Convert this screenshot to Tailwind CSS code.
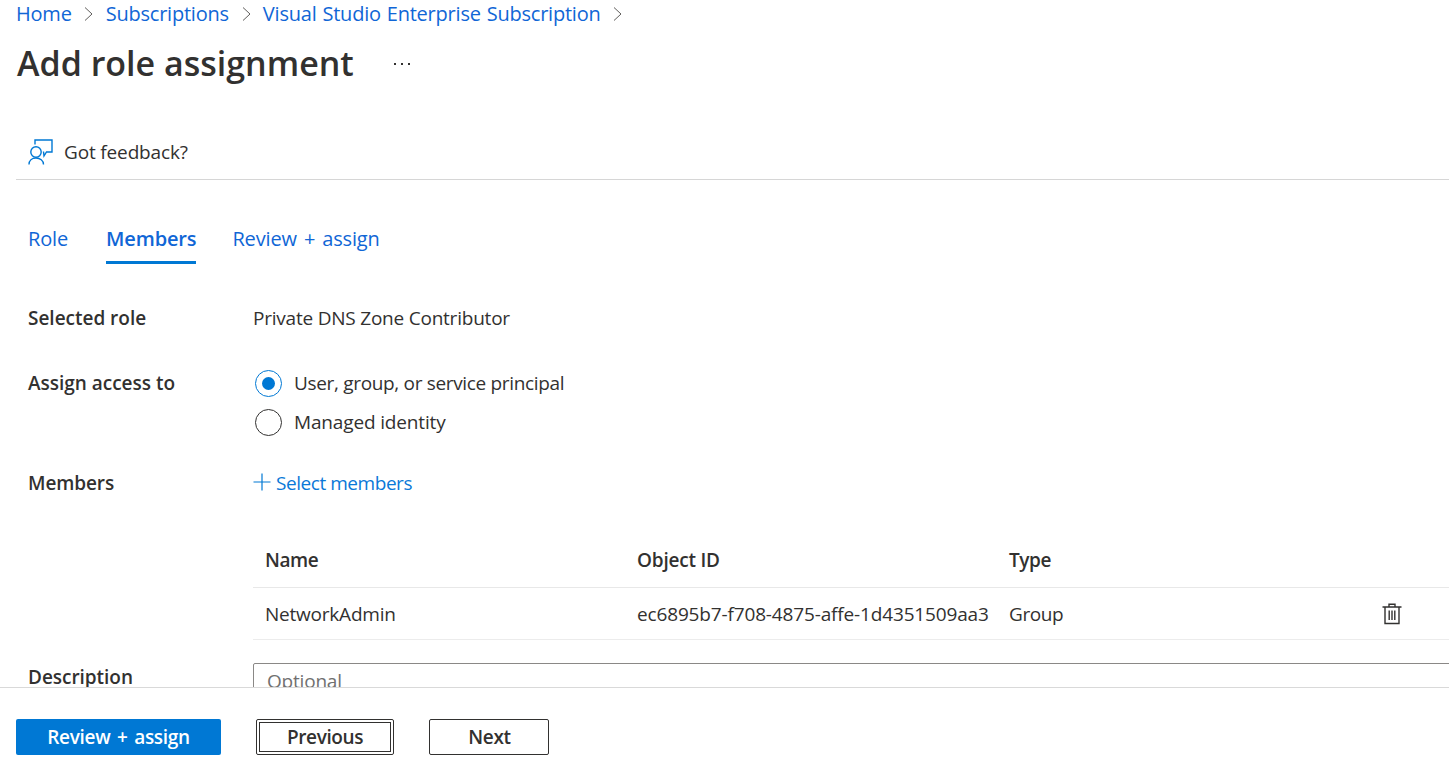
<!DOCTYPE html>
<html lang="en">
<head>
<meta charset="utf-8">
<script src="https://cdn.jsdelivr.net/npm/@tailwindcss/browser@4"></script>
<title>Add role assignment</title>
</head>
<body class="bg-white overflow-hidden">
<div class="h-[775px] w-[1449px] flex flex-col overflow-hidden font-['Open_Sans','Liberation_Sans',sans-serif] text-[#323130]">
  <main class="h-[687px] overflow-hidden">
    <nav class="h-[28px] pl-4 flex items-center text-[20px] leading-[28px] text-[#1066d6] tracking-[-0.22px] [word-spacing:1px]">
      <a>Home</a>
      <svg class="w-[12px] h-[16px] ml-[10px] mr-[12px] text-[#605e5c]" viewBox="0 0 12 16" fill="none" stroke="currentColor" stroke-width="1"><path d="M3 1.5 L10 8 L3 14.5"/></svg>
      <a>Subscriptions</a>
      <svg class="w-[12px] h-[16px] mx-[11px] text-[#605e5c]" viewBox="0 0 12 16" fill="none" stroke="currentColor" stroke-width="1"><path d="M3 1.5 L10 8 L3 14.5"/></svg>
      <a>Visual Studio Enterprise Subscription</a>
      <svg class="w-[12px] h-[16px] mx-[10px] text-[#605e5c]" viewBox="0 0 12 16" fill="none" stroke="currentColor" stroke-width="1"><path d="M3 1.5 L10 8 L3 14.5"/></svg>
    </nav>
    <div class="h-[70px] pl-[17px] flex items-center">
      <h1 class="text-[34px] leading-[44px] font-semibold mb-[1px]">Add role assignment</h1>
      <span class="ml-[40px] mt-[2px] flex gap-[5px]"><i class="block w-[2px] h-[2px] bg-[#323130]"></i><i class="block w-[2px] h-[2px] bg-[#323130]"></i><i class="block w-[2px] h-[2px] bg-[#323130]"></i></span>
    </div>
    <div class="ml-4 h-[82px] border-b border-[#d6d6d6] pt-[41px] pl-[12px] flex items-start">
      <svg class="w-[26px] h-[26px] text-[#0078d4]" viewBox="0 0 26 26" fill="none" stroke="currentColor" stroke-width="1.4"><path d="M7 5.5 V1 H24 V13 H18.5 L16 17 L15.5 12.5"/><circle cx="8" cy="13" r="5.2"/><path d="M1 25.5 C1 21.5 4 19 8 19 C12 19 15.5 21.5 15.5 25.5"/></svg>
      <span class="ml-[10px] text-[19px] leading-[26px] tracking-[-0.15px]">Got feedback?</span>
    </div>
    <div class="h-[83px] pl-[28px] flex items-start pt-[45px] text-[20px] leading-[28px] text-[#1066d6] tracking-[-0.15px] [word-spacing:2px]">
      <a class="h-[39px]">Role</a>
      <a class="h-[39px] ml-[38px] font-semibold border-b-[3px] border-[#0078d4]">Members</a>
      <a class="h-[39px] ml-[36px]">Review + assign</a>
    </div>
    <div class="pl-[28px] text-[19px] leading-[26px] tracking-[-0.22px]">
      <div class="flex h-[26px] mt-[42px]">
        <div class="w-[225px] shrink-0 font-semibold tracking-[-0.02px]">Selected role</div>
        <div>Private DNS Zone Contributor</div>
      </div>
      <div class="flex mt-[39px]">
        <div class="w-[227px] shrink-0 font-semibold tracking-[-0.02px]">Assign access to</div>
        <div class="flex flex-col gap-[13px]">
          <label class="flex items-center gap-[12px] h-[26px] tracking-[-0.33px]"><span class="w-[27px] h-[27px] rounded-full border border-[#0078d4] flex items-center justify-center"><span class="w-[13px] h-[13px] rounded-full bg-[#0078d4]"></span></span>User, group, or service principal</label>
          <label class="flex items-center gap-[12px] h-[26px] tracking-[-0.15px]"><span class="w-[27px] h-[27px] rounded-full border border-[#323130]"></span>Managed identity</label>
        </div>
      </div>
      <div class="flex mt-[35px]">
        <div class="w-[225px] shrink-0 font-semibold tracking-[-0.1px]">Members</div>
        <a class="flex items-center text-[#0a78d8] tracking-[-0.45px]"><svg class="w-[18px] h-[18px] mr-[5px] mb-[3px] text-[#0078d4]" viewBox="0 0 18 18" fill="none" stroke="currentColor" stroke-width="1.2"><path d="M9 0.5 V17.5 M0.5 9 H17.5"/></svg>Select members</a>
      </div>
      <div class="ml-[225px] mt-[51px]">
        <div class="grid grid-cols-[372px_372px_1fr_48px] h-[41px] border-b border-[#e8e8e8] pl-[12px] font-semibold items-start tracking-[-0.4px]">
          <div>Name</div><div class="tracking-[-0.2px]">Object ID</div><div>Type</div><div></div>
        </div>
        <div class="grid grid-cols-[372px_372px_1fr_67px] h-[52px] border-b border-[#ececec] pl-[12px] items-center tracking-[-0.22px]">
          <div>NetworkAdmin</div><div class="whitespace-nowrap tracking-[-0.15px]">ec6895b7-f708-4875-affe-1d4351509aa3</div><div class="tracking-[-0.4px]">Group</div>
          <div><svg class="w-[20px] h-[22px] text-[#323130]" viewBox="0 0 20 22" fill="none" stroke="currentColor" stroke-width="1.4"><path d="M0.5 4 H19.5 M7 4 V1.2 H13 V4 M3 4 V20.5 H17 V4 M7.2 7.5 V17 M10 7.5 V17 M12.8 7.5 V17"/></svg></div>
        </div>
      </div>
      <div class="flex mt-[23px]">
        <div class="w-[225px] shrink-0 font-semibold pt-[1px] tracking-[-0.04px]">Description</div>
        <div class="w-[1220px] shrink-0 h-[60px] border border-[#8a8886] rounded-t-[2px] pl-[13px] pt-[4px] text-[#707070] tracking-[-0.2px]">Optional</div>
      </div>
    </div>
  </main>
  <footer class="flex-1 border-t border-[#d9d9d9] pl-4 flex items-start pt-[31px] gap-[35px] text-[19px] font-semibold">
    <button class="w-[205px] h-[36px] rounded-[2px] bg-[#0078d4] text-white flex items-center justify-center tracking-[-0.3px] [word-spacing:2px]">Review + assign</button>
    <button class="w-[138px] h-[36px] rounded-[2px] border border-[#323130] p-[2px] flex tracking-[-0.4px]"><span class="flex-1 border border-[#323130] flex items-center justify-center">Previous</span></button>
    <button class="w-[120px] h-[36px] rounded-[2px] border border-[#323130] flex items-center justify-center pl-[1px] tracking-[-0.3px]">Next</button>
  </footer>
</div>
</body>
</html>
